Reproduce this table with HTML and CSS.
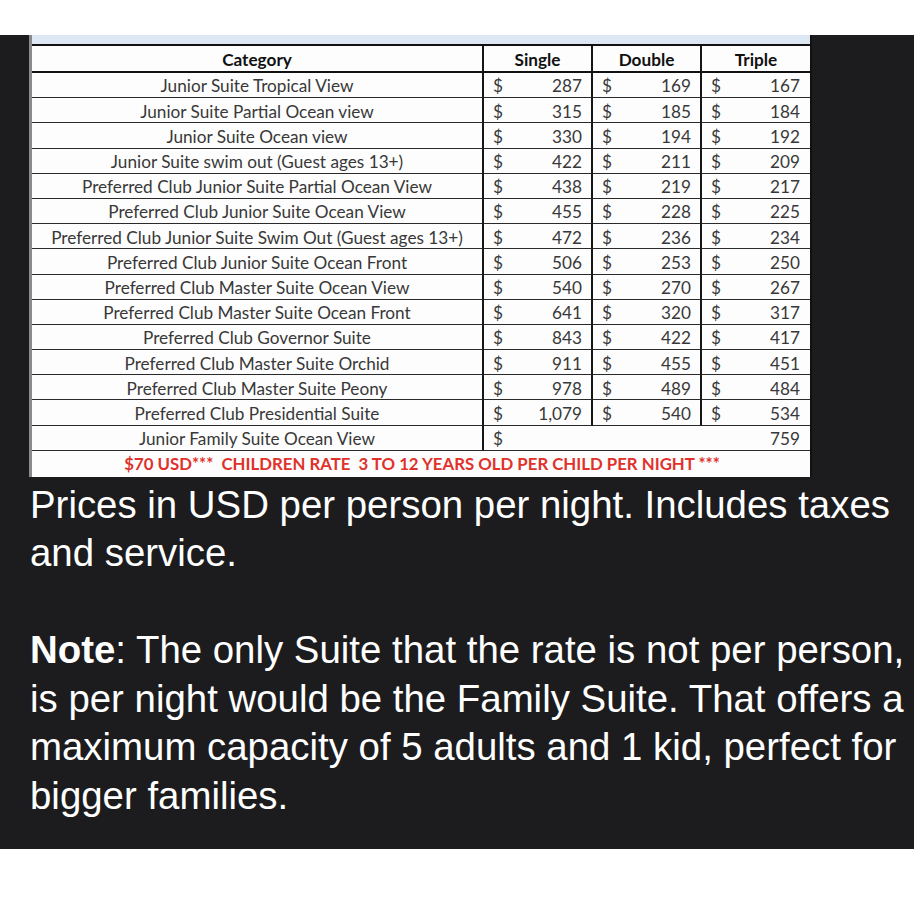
FILE: index.html
```html
<!DOCTYPE html>
<html lang="en">
<head>
<meta charset="utf-8">
<title>Suite rates</title>
<link rel="stylesheet" href="styles.css">
</head>
<body>
<div class="topbar"></div>
<main class="dark">
  <div class="sheet">
    <div class="strip"></div>
    <div class="grid">
      <div class="cell head cat">Category</div>
      <div class="cell head">Single</div>
      <div class="cell head">Double</div>
      <div class="cell head last">Triple</div>

      <div class="cell cat">Junior Suite Tropical View</div>
      <div class="cell money"><span>$</span><span>287</span></div>
      <div class="cell money"><span>$</span><span>169</span></div>
      <div class="cell money last"><span>$</span><span>167</span></div>

      <div class="cell cat">Junior Suite Partial Ocean view</div>
      <div class="cell money"><span>$</span><span>315</span></div>
      <div class="cell money"><span>$</span><span>185</span></div>
      <div class="cell money last"><span>$</span><span>184</span></div>

      <div class="cell cat">Junior Suite Ocean view</div>
      <div class="cell money"><span>$</span><span>330</span></div>
      <div class="cell money"><span>$</span><span>194</span></div>
      <div class="cell money last"><span>$</span><span>192</span></div>

      <div class="cell cat">Junior Suite swim out (Guest ages 13+)</div>
      <div class="cell money"><span>$</span><span>422</span></div>
      <div class="cell money"><span>$</span><span>211</span></div>
      <div class="cell money last"><span>$</span><span>209</span></div>

      <div class="cell cat">Preferred Club Junior Suite Partial Ocean View</div>
      <div class="cell money"><span>$</span><span>438</span></div>
      <div class="cell money"><span>$</span><span>219</span></div>
      <div class="cell money last"><span>$</span><span>217</span></div>

      <div class="cell cat">Preferred Club Junior Suite Ocean View</div>
      <div class="cell money"><span>$</span><span>455</span></div>
      <div class="cell money"><span>$</span><span>228</span></div>
      <div class="cell money last"><span>$</span><span>225</span></div>

      <div class="cell cat">Preferred Club Junior Suite Swim Out (Guest ages 13+)</div>
      <div class="cell money"><span>$</span><span>472</span></div>
      <div class="cell money"><span>$</span><span>236</span></div>
      <div class="cell money last"><span>$</span><span>234</span></div>

      <div class="cell cat">Preferred Club Junior Suite Ocean Front</div>
      <div class="cell money"><span>$</span><span>506</span></div>
      <div class="cell money"><span>$</span><span>253</span></div>
      <div class="cell money last"><span>$</span><span>250</span></div>

      <div class="cell cat">Preferred Club Master Suite Ocean View</div>
      <div class="cell money"><span>$</span><span>540</span></div>
      <div class="cell money"><span>$</span><span>270</span></div>
      <div class="cell money last"><span>$</span><span>267</span></div>

      <div class="cell cat">Preferred Club Master Suite Ocean Front</div>
      <div class="cell money"><span>$</span><span>641</span></div>
      <div class="cell money"><span>$</span><span>320</span></div>
      <div class="cell money last"><span>$</span><span>317</span></div>

      <div class="cell cat">Preferred Club Governor Suite</div>
      <div class="cell money"><span>$</span><span>843</span></div>
      <div class="cell money"><span>$</span><span>422</span></div>
      <div class="cell money last"><span>$</span><span>417</span></div>

      <div class="cell cat">Preferred Club Master Suite Orchid</div>
      <div class="cell money"><span>$</span><span>911</span></div>
      <div class="cell money"><span>$</span><span>455</span></div>
      <div class="cell money last"><span>$</span><span>451</span></div>

      <div class="cell cat">Preferred Club Master Suite Peony</div>
      <div class="cell money"><span>$</span><span>978</span></div>
      <div class="cell money"><span>$</span><span>489</span></div>
      <div class="cell money last"><span>$</span><span>484</span></div>

      <div class="cell cat">Preferred Club Presidential Suite</div>
      <div class="cell money"><span>$</span><span>1,079</span></div>
      <div class="cell money"><span>$</span><span>540</span></div>
      <div class="cell money last"><span>$</span><span>534</span></div>

      <div class="cell cat">Junior Family Suite Ocean View</div>
      <div class="cell money span3 last"><span>$</span><span>759</span></div>

      <div class="cell footer">$70 USD***  CHILDREN RATE  3 TO 12 YEARS OLD PER CHILD PER NIGHT ***</div>
    </div>
  </div>
  <div class="notes">
    <p>Prices in USD per person per night. Includes taxes and service.</p>
    <p><strong>Note</strong>: The only Suite that the rate is not per person, is per night would be the Family Suite. That offers a maximum capacity of 5 adults and 1 kid, perfect for bigger families.</p>
  </div>
</main>
</body>
</html>
```
FILE: styles.css
```css
html, body {
  margin: 0;
  padding: 0;
  background: #ffffff;
}

.topbar {
  height: 35px;
  background: #ffffff;
}

.dark {
  background: #1c1c1e;
  padding: 0 0 29px 29px;
}

.sheet {
  width: 783px;
  box-sizing: border-box;
  background: #fdfdfd;
  border-left: 3px solid #8a8a8a;
  border-right: 2px solid #111111;
}

.strip {
  height: 9px;
  background: #dde7f3;
  border-bottom: 2px solid #111111;
}

.grid {
  display: grid;
  grid-template-columns: 452px 109px 109px 108px;
  grid-template-rows: 27px repeat(15, 25.2px) 26px;
  font-family: Lato, "Open Sans", sans-serif;
  font-size: 17.2px;
  color: #383838;
}

.cell {
  box-sizing: border-box;
  border-bottom: 1px solid #2a2a2a;
  border-right: 2px solid #161616;
  display: flex;
  align-items: center;
  justify-content: center;
  white-space: nowrap;
  line-height: 1;
  padding-top: 2px;
}

.cell.last {
  border-right: none;
}

.head {
  font-weight: 700;
  color: #111111;
  border-bottom: 2px solid #111111;
}

.money {
  justify-content: space-between;
  padding: 2px 9px 0 9px;
}

.money.last {
  padding-right: 10px;
}

.span3 {
  grid-column: span 3;
}

.footer {
  grid-column: span 4;
  border: none;
  color: #e0312b;
  font-weight: 700;
  font-size: 16.8px;
  white-space: pre;
  padding-left: 2px;
}

.notes {
  padding-top: 4px;
  width: 884px;
  margin-left: 1px;
  font-family: "Liberation Sans", Arial, sans-serif;
  font-size: 38.4px;
  line-height: 48.5px;
  color: #ffffff;
}

.notes p {
  margin: 0;
}

.notes p + p {
  margin-top: 48.5px;
}

.notes strong {
  font-weight: 700;
}
```
